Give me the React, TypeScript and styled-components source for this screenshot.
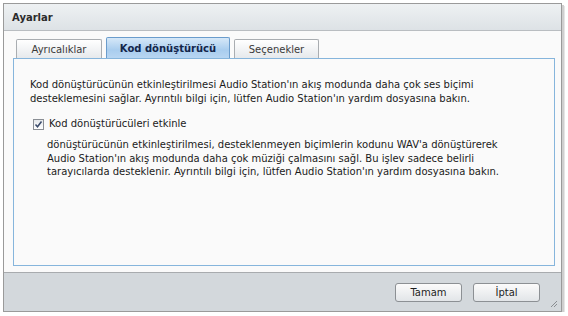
import React from 'react';
import styled, { createGlobalStyle } from 'styled-components';

const GlobalStyle = createGlobalStyle`
  html, body {
    margin: 0;
    padding: 0;
    background: #ffffff;
  }
  body {
    font-family: "DejaVu Sans", Verdana, sans-serif;
    font-size: 10px;
    color: #1a1a1a;
  }
`;

const tabs = [
  { label: 'Ayrıcalıklar', width: 86 },
  { label: 'Kod dönüştürücü', width: 124 },
  { label: 'Seçenekler', width: 85 },
];

function App() {
  return (
    <>
      <GlobalStyle />
      <Page>
        <Window>
          <TitleBar>Ayarlar</TitleBar>
          <Body>
            <TabStrip>
              {tabs.map((t, i) => (
                <Tab key={t.label} $active={i === 1} $width={t.width}>
                  {t.label}
                </Tab>
              ))}
            </TabStrip>
            <Panel>
              <Paragraph>
                Kod dönüştürücünün etkinleştirilmesi Audio Station'ın akış modunda daha çok ses biçimi
                <br />
                desteklemesini sağlar. Ayrıntılı bilgi için, lütfen Audio Station'ın yardım dosyasına bakın.
              </Paragraph>
              <CheckRow>
                <CheckBox>
                  <svg width="9" height="9" viewBox="0 0 9 9">
                    <path d="M1.5 4.5 L3.5 6.8 L7.5 1.5" fill="none" stroke="#3a4a6a" strokeWidth="1.5" />
                  </svg>
                </CheckBox>
                <span>Kod dönüştürücüleri etkinle</span>
              </CheckRow>
              <Note>
                dönüştürücünün etkinleştirilmesi, desteklenmeyen biçimlerin kodunu WAV'a dönüştürerek
                <br />
                Audio Station'ın akış modunda daha çok müziği çalmasını sağl. Bu işlev sadece belirli
                <br />
                tarayıcılarda desteklenir. Ayrıntılı bilgi için, lütfen Audio Station'ın yardım dosyasına bakın.
              </Note>
            </Panel>
          </Body>
          <Footer>
            <Button>Tamam</Button>
            <Button>İptal</Button>
            <Grip>
              <svg width="8" height="8" viewBox="0 0 8 8">
                <path d="M7 1 L1 7 M7 4 L4 7" stroke="#8a8e92" strokeWidth="1" />
              </svg>
            </Grip>
          </Footer>
        </Window>
      </Page>
    </>
  );
}

const Page = styled.div`
  padding: 3px 0 0 3px;
`;

const Window = styled.div`
  display: flex;
  flex-direction: column;
  width: 557px;
  height: 307px;
  border: 1px solid #9a9a9a;
  box-shadow: 2px 2px 0 #cfcfcf, 3px 3px 0 #e6e6e6;
  background: #fafafa;
`;

const TitleBar = styled.div`
  height: 26px;
  display: flex;
  align-items: center;
  padding-left: 8px;
  font-weight: bold;
  font-size: 10px;
  color: #2b2b2b;
  background: linear-gradient(#eef1f3, #dde2e6);
  border-bottom: 1px solid #b9bdc1;
`;

const Body = styled.div`
  flex: 1;
  padding: 6px 6px 6px 9px;
  display: flex;
  flex-direction: column;
`;

const TabStrip = styled.div`
  display: flex;
  align-items: flex-end;
  gap: 4px;
  padding-left: 3px;
  height: 21px;
`;

const Tab = styled.div<{ $active?: boolean; $width: number }>`
  width: ${(p) => p.$width}px;
  height: ${(p) => (p.$active ? 21 : 19)}px;
  display: flex;
  align-items: center;
  justify-content: center;
  box-sizing: border-box;
  border: 1px solid ${(p) => (p.$active ? '#6a9ccc' : '#a9adb1')};
  border-bottom: none;
  border-radius: 2px 2px 0 0;
  font-size: 10px;
  font-weight: ${(p) => (p.$active ? 'bold' : 'normal')};
  color: ${(p) => (p.$active ? '#13254a' : '#3a3a3a')};
  background: ${(p) =>
    p.$active
      ? 'linear-gradient(#d6e8f8, #a9cdee 60%, #b8d6f2)'
      : 'linear-gradient(#ffffff, #e6e9ec)'};
`;

const Panel = styled.div`
  flex: 1;
  border: 1px solid #86b5dc;
  background: #fafafa;
  padding: 19px 16px 0 16px;
`;

const Paragraph = styled.p`
  margin: 0;
  line-height: 14px;
  font-size: 10px;
`;

const CheckRow = styled.div`
  display: flex;
  align-items: center;
  gap: 5px;
  margin-top: 11px;
  padding-left: 3px;
  line-height: 14px;
`;

const CheckBox = styled.span`
  width: 9px;
  height: 9px;
  border: 1px solid #8a8e94;
  background: linear-gradient(#e4e7ea, #ffffff);
  display: flex;
  align-items: center;
  justify-content: center;
`;

const Note = styled.p`
  margin: 7px 0 0 17px;
  line-height: 13.5px;
  font-size: 10px;
  white-space: nowrap;
`;

const Footer = styled.div`
  height: 38px;
  border-top: 1px solid #a8abae;
  background: #d3d8dc;
  display: flex;
  align-items: center;
  justify-content: flex-end;
  gap: 11px;
  padding-right: 21px;
  position: relative;
`;

const Button = styled.button`
  width: 67px;
  height: 19px;
  border: 1px solid #8c9094;
  border-radius: 3px;
  background: linear-gradient(#fbfbfb, #e2e5e8);
  font-family: "DejaVu Sans", Verdana, sans-serif;
  font-size: 10px;
  color: #1e1e1e;
  padding: 0;
`;

const Grip = styled.span`
  position: absolute;
  right: 3px;
  bottom: 3px;
  width: 8px;
  height: 8px;
  display: flex;
`;

export default App;
